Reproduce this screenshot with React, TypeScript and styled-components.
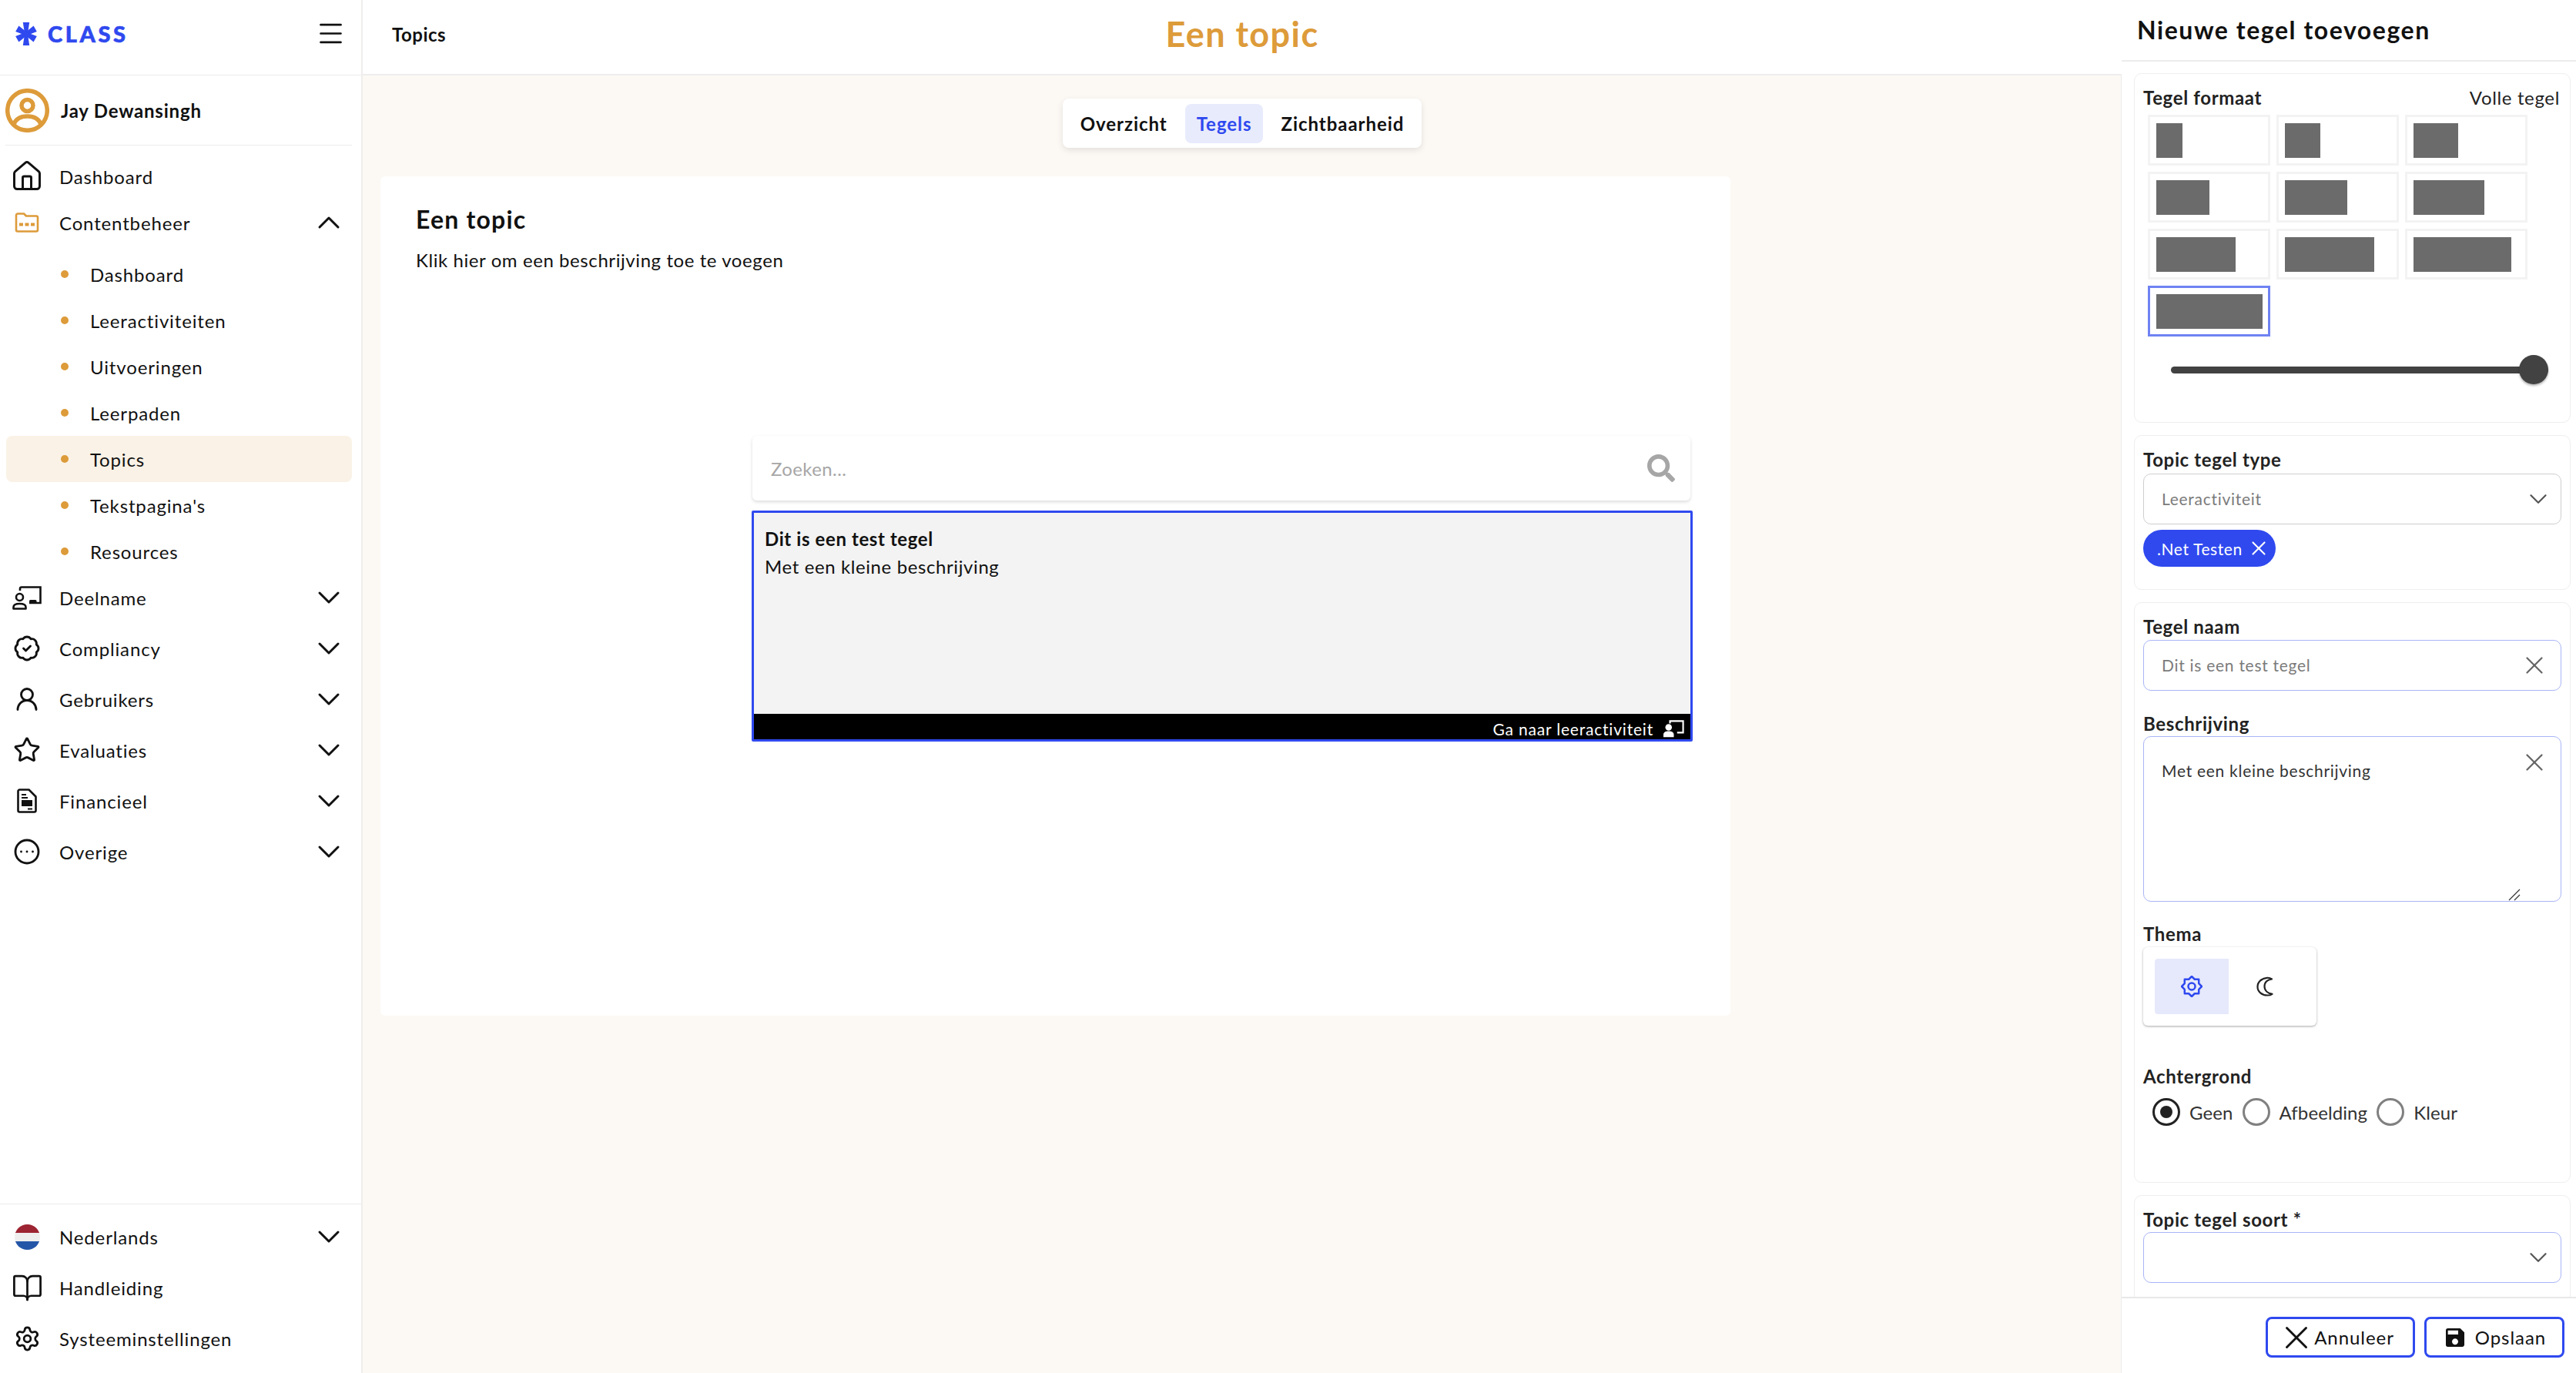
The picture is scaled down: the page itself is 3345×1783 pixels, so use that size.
import React from 'react';
import styled, { createGlobalStyle } from 'styled-components';
import { ChevronDown, ChevronUp, Menu, House, BadgeCheck, UserRound, Star, CircleEllipsis, BookOpen, Settings, X } from 'lucide-react';
import { FaSearch } from 'react-icons/fa';
import { MdSave } from 'react-icons/md';

const blue = '#2f49ef';
const orange = '#dd9b3a';

const Global = createGlobalStyle`
  html, body { margin: 0; padding: 0; height: 100%; background: #fff; }
  body { font-family: "Lato", "Liberation Sans", sans-serif; color: #111; }
  * { box-sizing: border-box; }
  svg { flex: none; }
`;

const Page = styled.div`display: flex; height: 100vh; overflow: hidden;`;

const Sidebar = styled.aside`
  width: 471px; flex: none; display: flex; flex-direction: column; background: #fff;
  border-right: 2px solid #f0eeec;
`;
const Brand = styled.div`
  height: 98px; flex: none; display: flex; align-items: center; justify-content: space-between;
  padding: 0 20px 10px 20px; border-bottom: 1px solid #ececec;
`;
const Logo = styled.div`display: flex; align-items: center; gap: 14px; color: ${blue};`;
const LogoText = styled.span`font-size: 29px; font-weight: 900; letter-spacing: 3.6px; line-height: 1; -webkit-text-stroke: 0.6px ${blue};`;
const UserRow = styled.div`
  height: 91px; flex: none; margin: 0 12px 10px 7px; display: flex; align-items: center; gap: 15px;
  border-bottom: 1px solid #ececec;
`;
const UserName = styled.span`font-size: 24px; font-weight: 700; letter-spacing: 0.8px;`;
const Row = styled.div<{ $gap?: boolean }>`
  height: 60px; flex: none; margin: 0 12px ${p => (p.$gap ? '6px' : '0')} 8px; padding: 0 6px 0 10px;
  display: flex; align-items: center; font-size: 24px; letter-spacing: 0.85px; color: #111;
`;
const IconSlot = styled.span`width: 34px; height: 34px; flex: none; display: flex; align-items: center; justify-content: center; margin-right: 25px;`;
const RowLabel = styled.span`flex: 1;`;
const SubList = styled.div`margin-top: 7px;`;
const SubRow = styled.div<{ $active?: boolean }>`
  height: 60px; margin: 0 12px 0 8px; padding-left: 71px; display: flex; align-items: center; gap: 28px;
  font-size: 24px; letter-spacing: 0.85px; border-radius: 8px; background: ${p => (p.$active ? '#faf2e6' : 'transparent')};
`;
const Bullet = styled.span`width: 10px; height: 10px; border-radius: 50%; background: ${orange}; flex: none;`;
const SideFooter = styled.div`margin-top: auto; padding: 12px 0 9px; border-top: 1px solid #ececec;`;
const Flag = styled.span`
  width: 33px; height: 33px; border-radius: 50%; flex: none;
  background: linear-gradient(#9d2432 0 33%, #eeeeee 33% 66%, #2456a8 66% 100%);
`;

const Main = styled.main`flex: 1; min-width: 0; display: flex; flex-direction: column; background: #fcf9f5;`;
const TopBar = styled.header`
  height: 98px; flex: none; background: #fff; border-bottom: 2px solid #eeeeee; position: relative;
  display: flex; align-items: center; justify-content: center; padding-bottom: 8px;
`;
const Crumb = styled.span`position: absolute; left: 38px; top: 29px; font-size: 24px; font-weight: 700; letter-spacing: 0.5px; line-height: 32px;`;
const PageTitle = styled.h1`margin: 0; font-size: 45px; font-weight: 700; color: ${orange}; letter-spacing: 1.4px; line-height: 1;`;
const Tabs = styled.div`
  align-self: center; margin-top: 30px; width: 466px; height: 64px; display: flex; align-items: center; justify-content: center; gap: 8px;
  background: #fff; border-radius: 8px; box-shadow: 0 3px 8px rgba(0,0,0,.1); padding: 7px 0;
`;
const Tab = styled.span<{ $active?: boolean }>`
  height: 51px; padding: 0 15px; display: flex; align-items: center; border-radius: 8px; font-size: 24px; font-weight: 700;
  letter-spacing: 0.95px; color: ${p => (p.$active ? blue : '#111')}; background: ${p => (p.$active ? '#e8ebfc' : 'transparent')};
`;
const Card = styled.section`
  margin: 37px 0 0 23px; width: 1753px; height: 1090px; background: #fff; border-radius: 6px;
  padding: 36px 49px 0 46px; display: flex; flex-direction: column;
`;
const CardTitle = styled.h2`margin: 0; font-size: 32px; font-weight: 700; letter-spacing: 1.2px; line-height: 40px;`;
const CardText = styled.p`margin: 17px 0 0; font-size: 24px; letter-spacing: 0.58px; line-height: 32px;`;
const SearchBox = styled.div`
  margin: 212px 3px 0 auto; width: 1218px; height: 84px; flex: none; background: #fff; border-radius: 6px;
  box-shadow: 0 2px 4px rgba(0,0,0,.14); display: flex; align-items: center; justify-content: space-between;
  padding: 0 20px 0 24px; color: #a6a6a6; font-size: 24px; letter-spacing: 0.4px;
`;
const Tile = styled.div`
  margin: 13px 0 0 auto; width: 1222px; height: 300px; flex: none; border: 3px solid ${blue}; border-radius: 2px;
  background: #f3f3f3; display: flex; flex-direction: column;
`;
const TileBody = styled.div`flex: 1; padding: 16px 14px; font-size: 24px; line-height: 36px; letter-spacing: 0.6px;`;
const TileName = styled.div`font-weight: 700;`;
const TileBar = styled.div`
  height: 33px; background: #000; color: #fff; display: flex; align-items: center; justify-content: flex-end; gap: 13px;
  padding: 5px 8px 0 0; font-size: 21px; letter-spacing: 0.8px;
`;

const Panel = styled.aside`
  width: 591px; flex: none; display: flex; flex-direction: column; background: #fff; border-left: 1px solid #ececec; margin-left: -1px;
`;
const PanelHead = styled.div`
  height: 80px; flex: none; display: flex; align-items: center; padding: 0 0 2px 20px; border-bottom: 2px solid #ececec;
  font-size: 32px; font-weight: 700; letter-spacing: 1.55px;
`;
const PanelBody = styled.div`flex: 1; min-height: 0; overflow: hidden; padding: 15px 7px 0 16px; display: flex; flex-direction: column; gap: 16px;`;
const FormCard = styled.div<{ $h?: number }>`
  flex: none; border: 1px solid #eeeeee; border-radius: 10px; padding: 15px 12px 0 11px; height: ${p => (p.$h ? `${p.$h}px` : 'auto')};
`;
const LabelRow = styled.div<{ $mt?: number }>`
  height: 30px; margin-top: ${p => p.$mt ?? 0}px; display: flex; align-items: center; justify-content: space-between;
  font-size: 24px; letter-spacing: 0.65px; color: #222;
`;
const Strong = styled.span`font-weight: 700;`;
const Thin = styled.span`font-weight: 400; margin-right: 1px;`;
const SizeGrid = styled.div`margin: 8px 0 0 6px; display: grid; grid-template-columns: repeat(3, 159px); grid-auto-rows: 66px; gap: 8px;`;
const SizeCell = styled.div<{ $active?: boolean }>`
  border: 3px solid ${p => (p.$active ? '#6f83f2' : '#f3f3f3')}; padding: 8px; background: #fff;
`;
const SizeFill = styled.div`height: 45px; background: #6b6b6b;`;
const SliderRow = styled.div`margin: 24px 0 0 36px; width: 490px; height: 38px; position: relative; display: flex; align-items: center;`;
const Track = styled.div`height: 9px; width: 100%; border-radius: 5px; background: #424242;`;
const Thumb = styled.div`
  position: absolute; right: 0; top: 0; width: 38px; height: 38px; border-radius: 50%; background: #424242;
  box-shadow: 0 2px 3px rgba(0,0,0,.3);
`;
const Field = styled.div<{ $tint?: boolean; $h?: number; $mt?: number; $top?: boolean }>`
  width: 543px; height: ${p => p.$h ?? 66}px; margin-top: ${p => p.$mt ?? 3}px; border: 1px solid ${p => (p.$tint ? '#a9b5f6' : '#cfcfcf')}; border-radius: 10px;
  display: flex; align-items: ${p => (p.$top ? 'flex-start' : 'center')}; justify-content: space-between; padding: ${p => (p.$top ? '14px 10px 0 23px' : '0 10px 0 23px')};
  font-size: 21px; letter-spacing: 0.72px; position: relative;
`;
const FieldText = styled.span<{ $dark?: boolean }>`color: ${p => (p.$dark ? '#333' : '#7b7b7b')}; line-height: 30px; margin-top: ${p => (p.$dark ? '15px' : '0')};`;
const ClearIcon = styled(X)`margin-right: 5px; color: #666;`;
const Resize = styled.svg`position: absolute; right: 52px; bottom: 0;`;
const Chip = styled.div`
  margin-top: 7px; width: 172px; height: 48px; border-radius: 24px; background: ${blue}; color: #fff; display: flex; align-items: center;
  padding-left: 18px; gap: 6px; font-size: 21px; letter-spacing: 0.6px;
`;
const ThemeBox = styled.div`
  margin-top: 3px; width: 225px; height: 102px; border-radius: 6px; background: #fff; padding: 15px; display: flex;
  box-shadow: 0 1px 3px rgba(0,0,0,.35);
`;
const ThemeOpt = styled.div<{ $active?: boolean }>`
  width: 96px; height: 72px; display: flex; align-items: center; justify-content: center; border-radius: 4px 0 0 4px; padding-right: ${p => (p.$active ? 0 : 3)}px;
  background: ${p => (p.$active ? '#e6e9fb' : 'transparent')};
`;
const Radios = styled.div`margin: 11px 0 0 12px; height: 42px; display: flex; align-items: center; font-size: 24px; letter-spacing: 0.1px; color: #333;`;
const Radio = styled.span<{ $on?: boolean }>`
  width: 36px; height: 36px; border-radius: 50%; border: 3px solid ${p => (p.$on ? '#222' : '#808080')}; display: flex; align-items: center; justify-content: center; margin-right: 12px; flex: none;
`;
const RadioDot = styled.span`width: 16px; height: 16px; border-radius: 50%; background: #222;`;
const RadioLabel = styled.span`margin-right: 12px;`;
const PanelFoot = styled.div`
  height: 99px; flex: none; border-top: 2px solid #e8e8e8; background: #fff; display: flex; justify-content: flex-end; gap: 12px; padding: 24px 15px 0 0;
`;
const Btn = styled.div<{ $w: number }>`
  width: ${p => p.$w}px; height: 53px; border: 3px solid ${blue}; border-radius: 8px; display: flex; align-items: center; justify-content: center; gap: 10px;
  font-size: 24px; letter-spacing: 0.95px; color: #111;
`;
const BtnCross = styled(X)`margin: -8px -12px;`;

const ARMS = [0, 60, 120, 180, 240, 300];
const LogoMark = () => (
  <svg width="28" height="32" viewBox="0 0 28 32" fill="currentColor">
    {ARMS.map(a => (
      <path key={a} d="M12 15.500 L9.800 1 L18.200 1 L16 15.500 Z" transform={`rotate(${a} 14 16) translate(0 ${a % 180 === 0 ? 0 : 1.500})`} />
    ))}
    <circle cx="14" cy="16" r="3.600" />
  </svg>
);
const Avatar = () => (
  <svg width="57" height="57" viewBox="0 0 57 57" fill="none" stroke={orange} strokeWidth="5.500">
    <circle cx="28.500" cy="28.500" r="25.800" />
    <circle cx="28.500" cy="22" r="7.500" />
    <path d="M10.500 47c3-8 10-11 18-11s15 3 18 11" />
  </svg>
);
const FolderDots = () => (
  <svg width="32" height="28" viewBox="0 0 32 28" fill="none" stroke={orange} strokeWidth="2.600" strokeLinejoin="round">
    <path d="M2 4.500a2 2 0 0 1 2-2h8l3 3h13a2 2 0 0 1 2 2v16a2 2 0 0 1-2 2H4a2 2 0 0 1-2-2z" />
    <path d="M6 14.500h5v4H6zM13.500 14.500h5v4h-5zM21 14.500h5v4h-5z" fill={orange} stroke="none" />
  </svg>
);
const Presenter = () => (
  <svg width="38" height="31" viewBox="0 0 38 31" fill="none" stroke="#111" strokeWidth="2.600">
    <path d="M10 6V3.500a2 2 0 0 1 2-2h24.500V22H22" />
    <path d="M22 22v-2.500a1.500 1.500 0 0 1 1.500-1.500h6.500a1.500 1.500 0 0 1 1.500 1.500V22z" fill="#111" stroke="none" />
    <circle cx="9.500" cy="14.500" r="4.500" />
    <path d="M1.500 29.500v-2c0-3 3.500-4.500 8-4.500s8 1.500 8 4.500v2z" strokeLinejoin="round" />
  </svg>
);
const PresenterFilled = () => (
  <svg width="27" height="24" viewBox="0 0 38 32" fill="none" stroke="#fff" strokeWidth="3">
    <path d="M12 7V2.500h24v21H25" />
    <circle cx="9.500" cy="14" r="6" fill="#fff" stroke="none" />
    <path d="M0 32v-5c0-4 4-6 9.500-6s9.500 2 9.500 6v5z" fill="#fff" stroke="none" />
  </svg>
);
const FileIcon = () => (
  <svg width="26" height="32" viewBox="0 0 26 32" fill="none" stroke="#111" strokeWidth="2.600" strokeLinejoin="round">
    <path d="M3.500 1.500h12l9 9v18a2 2 0 0 1-2 2h-19a2 2 0 0 1-2-2v-25a2 2 0 0 1 2-2z" />
    <path d="M6 8h6M6 12h8" strokeWidth="2" />
    <rect x="6" y="15" width="14" height="8" fill="#111" stroke="none" />
    <path d="M14 26.500h6" strokeWidth="2" />
  </svg>
);
const SunStar = () => {
  const pts: string[] = [];
  for (let i = 0; i < 16; i++) {
    const r = i % 2 === 0 ? 13 : 10;
    const a = (Math.PI * i) / 8 - Math.PI / 2;
    pts.push(`${(14 + r * Math.cos(a)).toFixed(2)},${(14 + r * Math.sin(a)).toFixed(2)}`);
  }
  return (
    <svg width="28" height="28" viewBox="0 0 28 28" fill="none" stroke={blue} strokeWidth="2.500" strokeLinejoin="round">
      <polygon points={pts.join(' ')} />
      <circle cx="14" cy="14" r="4.500" />
    </svg>
  );
};
const Crescent = () => (
  <svg width="24" height="26" viewBox="0 0 24 26" fill="none" stroke="#222" strokeWidth="2.200" strokeLinejoin="round">
    <path d="M15 1.800C8 2.300 2.500 7 2.500 13.500S8 24.200 15 24.500c2.500.1 5-.6 6.500-1.700-5.500-.8-10-4.300-10-9.800S15.500 4 21 3.300C19.500 2.300 17.300 1.600 15 1.800z" />
  </svg>
);

const subItems = ['Dashboard', 'Leeractiviteiten', 'Uitvoeringen', 'Leerpaden', 'Topics', "Tekstpagina's", 'Resources'];
const fills = [34, 46, 58, 69, 81, 92, 103, 116, 127, 138];

const sections: [string, React.ReactNode][] = [
  ['Deelname', <Presenter key="d" />],
  ['Compliancy', <BadgeCheck key="c" size={36} strokeWidth={1.9} />],
  ['Gebruikers', <UserRound key="g" size={36} strokeWidth={1.9} />],
  ['Evaluaties', <Star key="e" size={36} strokeWidth={1.9} />],
  ['Financieel', <FileIcon key="f" />],
  ['Overige', <CircleEllipsis key="o" size={36} strokeWidth={1.9} />],
];

const NavChevron = () => <ChevronDown size={48} strokeWidth={1.5} />;

export default function App() {
  return (
    <>
      <Global />
      <Page>
        <Sidebar>
          <Brand>
            <Logo><LogoMark /><LogoText>CLASS</LogoText></Logo>
            <Menu size={39} strokeWidth={1.6} color="#111" />
          </Brand>
          <UserRow><Avatar /><UserName>Jay Dewansingh</UserName></UserRow>
          <Row><IconSlot><House size={44} strokeWidth={1.6} /></IconSlot><RowLabel>Dashboard</RowLabel></Row>
          <Row>
            <IconSlot><FolderDots /></IconSlot><RowLabel>Contentbeheer</RowLabel>
            <ChevronUp size={48} strokeWidth={1.5} />
          </Row>
          <SubList>
            {subItems.map(s => (
              <SubRow key={s} $active={s === 'Topics'}><Bullet />{s}</SubRow>
            ))}
          </SubList>
          {sections.map(([label, icon]) => (
            <Row key={label} $gap>
              <IconSlot>{icon}</IconSlot><RowLabel>{label}</RowLabel>
              <NavChevron />
            </Row>
          ))}
          <SideFooter>
            <Row $gap>
              <IconSlot><Flag /></IconSlot><RowLabel>Nederlands</RowLabel>
              <NavChevron />
            </Row>
            <Row $gap><IconSlot><BookOpen size={41} strokeWidth={1.6} /></IconSlot><RowLabel>Handleiding</RowLabel></Row>
            <Row $gap><IconSlot><Settings size={35} strokeWidth={1.9} /></IconSlot><RowLabel>Systeeminstellingen</RowLabel></Row>
          </SideFooter>
        </Sidebar>

        <Main>
          <TopBar>
            <Crumb>Topics</Crumb>
            <PageTitle>Een topic</PageTitle>
          </TopBar>
          <Tabs>
            <Tab>Overzicht</Tab>
            <Tab $active>Tegels</Tab>
            <Tab>Zichtbaarheid</Tab>
          </Tabs>
          <Card>
            <CardTitle>Een topic</CardTitle>
            <CardText>Klik hier om een beschrijving toe te voegen</CardText>
            <SearchBox>
              <span>Zoeken...</span>
              <FaSearch size={36} color="#a6a6a6" />
            </SearchBox>
            <Tile>
              <TileBody>
                <TileName>Dit is een test tegel</TileName>
                <div>Met een kleine beschrijving</div>
              </TileBody>
              <TileBar>Ga naar leeractiviteit <PresenterFilled /></TileBar>
            </Tile>
          </Card>
        </Main>

        <Panel>
          <PanelHead>Nieuwe tegel toevoegen</PanelHead>
          <PanelBody>
            <FormCard $h={454}>
              <LabelRow><Strong>Tegel formaat</Strong><Thin>Volle tegel</Thin></LabelRow>
              <SizeGrid>
                {fills.map((w, i) => (
                  <SizeCell key={w} $active={i === fills.length - 1}>
                    <SizeFill style={{ width: w }} />
                  </SizeCell>
                ))}
              </SizeGrid>
              <SliderRow><Track /><Thumb /></SliderRow>
            </FormCard>
            <FormCard $h={201}>
              <LabelRow><Strong>Topic tegel type</Strong></LabelRow>
              <Field $mt={4}>
                <FieldText>Leeractiviteit</FieldText>
                <ChevronDown size={38} color="#555" strokeWidth={1.4} />
              </Field>
              <Chip>.Net Testen <X size={30} strokeWidth={1.7} /></Chip>
            </FormCard>
            <FormCard $h={754}>
              <LabelRow><Strong>Tegel naam</Strong></LabelRow>
              <Field $tint $mt={3}>
                <FieldText>Dit is een test tegel</FieldText>
                <ClearIcon size={38} strokeWidth={1.4} />
              </Field>
              <LabelRow $mt={27}><Strong>Beschrijving</Strong></LabelRow>
              <Field $tint $top $h={215} $mt={2}>
                <FieldText $dark>Met een kleine beschrijving</FieldText>
                <ClearIcon size={38} strokeWidth={1.4} />
                <Resize width="16" height="16" viewBox="0 0 16 16" stroke="#333" strokeWidth="1.200"><path d="M1 15L15 1M8 15L15 8" /></Resize>
              </Field>
              <LabelRow $mt={26}><Strong>Thema</Strong></LabelRow>
              <ThemeBox>
                <ThemeOpt $active><SunStar /></ThemeOpt>
                <ThemeOpt><Crescent /></ThemeOpt>
              </ThemeBox>
              <LabelRow $mt={50}><Strong>Achtergrond</Strong></LabelRow>
              <Radios>
                <Radio $on><RadioDot /></Radio><RadioLabel>Geen</RadioLabel>
                <Radio /><RadioLabel>Afbeelding</RadioLabel>
                <Radio /><RadioLabel>Kleur</RadioLabel>
              </Radios>
            </FormCard>
            <FormCard $h={160}>
              <LabelRow><Strong>Topic tegel soort *</Strong></LabelRow>
              <Field $tint $mt={2}>
                <span />
                <ChevronDown size={38} color="#555" strokeWidth={1.4} />
              </Field>
            </FormCard>
          </PanelBody>
          <PanelFoot>
            <Btn $w={194}><BtnCross size={50} strokeWidth={1.4} />Annuleer</Btn>
            <Btn $w={182}><MdSave size={32} />Opslaan</Btn>
          </PanelFoot>
        </Panel>
      </Page>
    </>
  );
}
